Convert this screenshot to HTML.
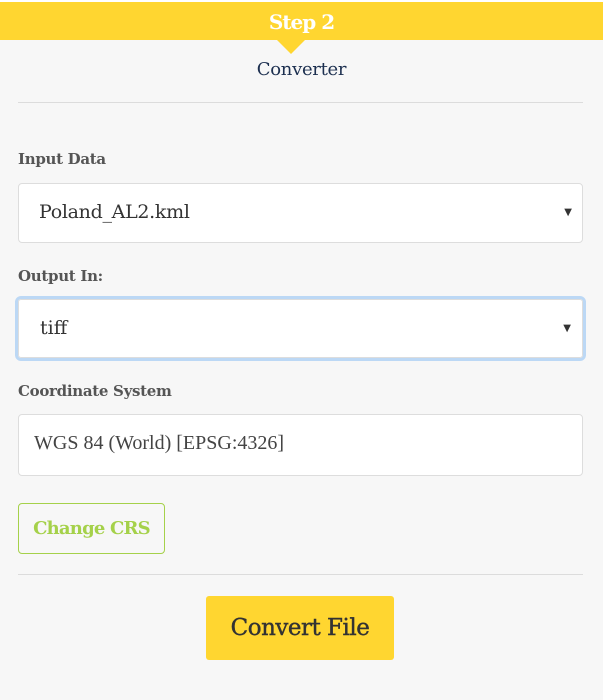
<!DOCTYPE html>
<html><head><meta charset="utf-8"><style>
*{box-sizing:border-box;margin:0;padding:0}
body{width:608px;height:700px;background:#fff;position:relative;overflow:hidden;font-family:"DejaVu Serif","Liberation Serif",serif}
.panel{position:absolute;left:0;top:2px;width:603px;height:698px;background:#f7f7f7}
.bar{position:absolute;left:0;top:2px;width:603px;height:38px;background:#ffd630;text-align:center;color:#fff;font-weight:bold;font-size:20px;line-height:40px;letter-spacing:-1px}
.tri{position:absolute;left:277px;top:40px;width:0;height:0;border-left:14px solid transparent;border-right:14px solid transparent;border-top:14px solid #ffd630}
.t{position:absolute;left:0;width:603px;text-align:center;top:59px;font-size:18px;color:#1d3050;letter-spacing:-0.3px}
.hr{position:absolute;left:18px;width:565px;height:1px;background:#dcdcdc}
.lbl{position:absolute;left:18px;font-size:15px;font-weight:bold;color:#555;letter-spacing:-0.3px}
.box{position:absolute;left:18px;width:565px;background:#fff;border:1px solid #ddd;border-radius:4px;color:#333}
.arr{position:absolute;right:10px;font-size:10px;color:#333}
</style></head><body>
<div class="panel"></div>
<div class="bar">Step 2</div>
<div class="tri"></div>
<div class="t">Converter</div>
<div class="hr" style="top:102px"></div>
<div class="lbl" style="top:150px">Input Data</div>
<div class="box" style="top:183px;height:60px"><span style="position:absolute;left:20px;top:17px;font-size:19px;letter-spacing:-0.3px">Poland_AL2.kml</span><span class="arr" style="top:23px">▼</span></div>
<div class="lbl" style="top:267px">Output In:</div>
<div class="box" style="left:15px;width:571px;top:296px;height:65px;border:3px solid #bcd8f5;border-radius:6px"><div style="position:absolute;inset:0;border:1px solid #ddd;border-radius:3px"></div><span style="position:absolute;left:22px;top:18px;font-size:19px">tiff</span><span class="arr" style="top:24px;right:12px">▼</span></div>
<div class="lbl" style="top:382px">Coordinate System</div>
<div class="box" style="top:414px;height:62px"><span style="position:absolute;left:15px;top:17px;font-size:20px;font-family:'Liberation Serif',serif;color:#444">WGS 84 (World) [EPSG:4326]</span></div>
<div style="position:absolute;left:18px;top:503px;width:147px;height:51px;border:1px solid #a5d14a;border-radius:4px;color:#a5d14a;font-size:18px;font-weight:bold;letter-spacing:-0.8px;text-align:center;line-height:49px">Change CRS</div>
<div class="hr" style="top:574px"></div>
<div style="position:absolute;left:206px;top:596px;width:188px;height:64px;background:#ffd630;border-radius:3px;color:#333;font-size:23px;letter-spacing:-0.5px;-webkit-text-stroke:0.4px #333;text-align:center;line-height:64px">Convert File</div>
</body></html>
